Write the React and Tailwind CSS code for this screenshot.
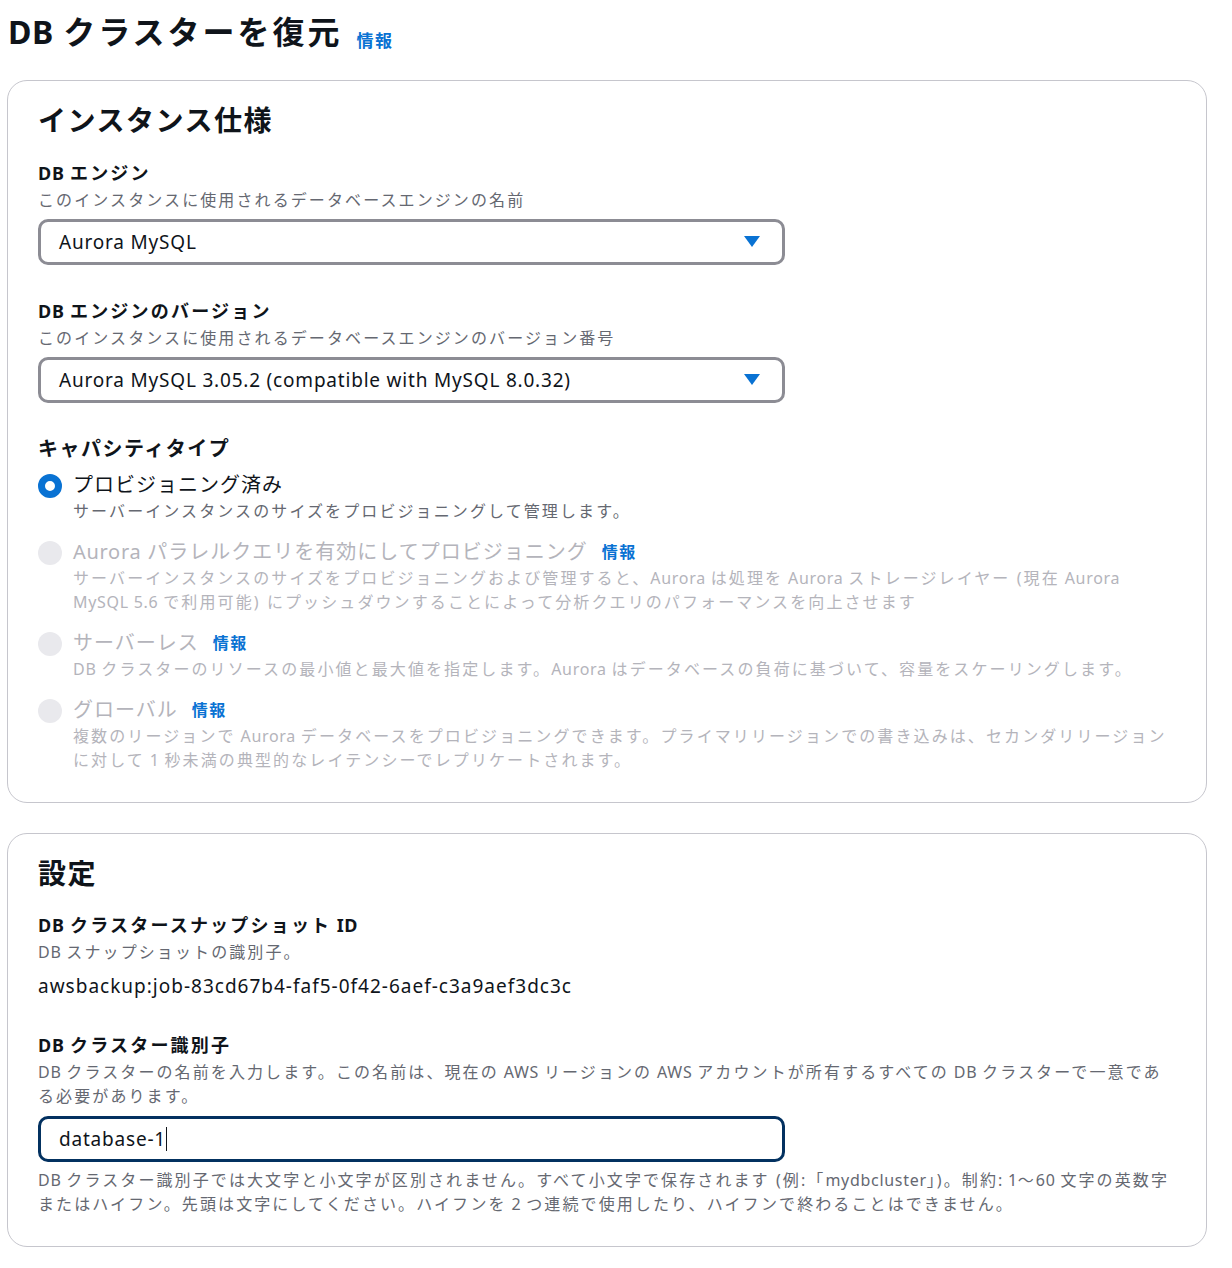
import React from "react";

const font = { fontFamily: '"Noto Sans", "Noto Sans CJK JP", sans-serif' };

// Latin runs keep a near-normal letter spacing; Japanese runs get the wider spacing of the parent.
const T = ({ children }) =>
  String(children)
    .split(/([\u0020-\u007e]*[A-Za-z0-9][\u0020-\u007e]*)/)
    .map((part, i) =>
      i % 2 === 1 ? (
        <span key={i} className="tracking-[0.7px]">{part}</span>
      ) : (
        part
      )
    );

const Info = ({ className = "" }) => (
  <a className={`text-[#0972d3] font-bold text-[16px] tracking-[1.5px] ${className}`}>情報</a>
);

const Field = ({ label, desc, children }) => (
  <div className="flex flex-col">
    <div className="text-[18px] leading-[29px] font-bold tracking-[2.2px] text-[#0f141a]"><T>{label}</T></div>
    <div className="text-[16px] leading-[24px] tracking-[2.1px] text-[#656871]"><T>{desc}</T></div>
    {children}
  </div>
);

const Select = ({ value }) => (
  <div className="mt-[7px] w-[747px] h-[46px] rounded-[10px] border-[3px] border-[#8c8c94] flex items-center justify-between pl-[18px] pr-[22px] text-[19px] tracking-[0.8px] text-[#0f141a]">
    <span>{value}</span>
    <svg width="16" height="12" viewBox="0 0 16 12">
      <path d="M0 0 H16 L8 11 Z" fill="#0972d3" />
    </svg>
  </div>
);

const Radio = ({ checked, disabled, label, info, children }) => (
  <div className="flex gap-[11px]">
    <div className="pt-[3px]">
      {checked ? (
        <div className="w-[24px] h-[24px] rounded-full border-[7px] border-[#0972d3] bg-white" />
      ) : (
        <div className="w-[24px] h-[24px] rounded-full bg-[#e9e9ed]" />
      )}
    </div>
    <div className="flex flex-col">
      <div className={`flex items-center gap-[14px] text-[20px] leading-[28px] tracking-[1px] ${disabled ? "text-[#b4b4bb]" : "text-[#0f141a]"}`}>
        <span><T>{label}</T></span>
        {info && <Info />}
      </div>
      <div className={`text-[16px] leading-[24px] tracking-[2.1px] ${disabled ? "text-[#b4b4bb]" : "text-[#656871]"}`}><T>{children}</T></div>
    </div>
  </div>
);

const App = () => {
  return (
    <div style={font} className="w-[1232px] min-h-[1268px] bg-white text-[#0f141a]">
      <div className="flex items-end gap-[14px] pl-[8px] pt-[10px]">
        <h1 className="text-[32px] leading-[44px] font-bold tracking-[3px]"><T>DB クラスターを復元</T></h1>
        <Info className="text-[17px] mb-[1px]" />
      </div>

      {/* インスタンス仕様 */}
      <div className="mt-[26px] ml-[7px] w-[1200px] rounded-[20px] border border-[#c6c6cd] pl-[30px] pr-[28px] pt-[21px] pb-[30px]">
        <h2 className="text-[28px] leading-[36px] font-bold tracking-[1.5px]">インスタンス仕様</h2>
        <div className="mt-[21px] flex flex-col gap-[32px]">
          <Field label="DB エンジン" desc="このインスタンスに使用されるデータベースエンジンの名前">
            <Select value="Aurora MySQL" />
          </Field>
          <Field label="DB エンジンのバージョン" desc="このインスタンスに使用されるデータベースエンジンのバージョン番号">
            <Select value="Aurora MySQL 3.05.2 (compatible with MySQL 8.0.32)" />
          </Field>
          <div className="flex flex-col">
            <div className="text-[20px] leading-[28px] font-bold tracking-[1.5px]">キャパシティタイプ</div>
            <div className="mt-[8px] flex flex-col gap-[15px]">
              <Radio checked label="プロビジョニング済み">
                サーバーインスタンスのサイズをプロビジョニングして管理します。
              </Radio>
              <Radio disabled info label="Aurora パラレルクエリを有効にしてプロビジョニング">
                サーバーインスタンスのサイズをプロビジョニングおよび管理すると、Aurora は処理を Aurora ストレージレイヤー (現在 Aurora MySQL 5.6 で利用可能) にプッシュダウンすることによって分析クエリのパフォーマンスを向上させます
              </Radio>
              <Radio disabled info label="サーバーレス">
                DB クラスターのリソースの最小値と最大値を指定します。Aurora はデータベースの負荷に基づいて、容量をスケーリングします。
              </Radio>
              <Radio disabled info label="グローバル">
                複数のリージョンで Aurora データベースをプロビジョニングできます。プライマリリージョンでの書き込みは、セカンダリリージョンに対して 1 秒未満の典型的なレイテンシーでレプリケートされます。
              </Radio>
            </div>
          </div>
        </div>
      </div>

      {/* 設定 */}
      <div className="mt-[30px] ml-[7px] w-[1200px] rounded-[20px] border border-[#c6c6cd] pl-[30px] pr-[28px] pt-[21px] pb-[30px]">
        <h2 className="text-[28px] leading-[36px] font-bold tracking-[1.5px]">設定</h2>
        <div className="mt-[20px] flex flex-col gap-[31px]">
          <Field label="DB クラスタースナップショット ID" desc="DB スナップショットの識別子。">
            <div className="mt-[8px] text-[19px] leading-[28px] tracking-[1px]">awsbackup:job-83cd67b4-faf5-0f42-6aef-c3a9aef3dc3c</div>
          </Field>
          <Field
            label="DB クラスター識別子"
            desc="DB クラスターの名前を入力します。この名前は、現在の AWS リージョンの AWS アカウントが所有するすべての DB クラスターで一意である必要があります。"
          >
            <div className="mt-[8px] w-[747px] h-[46px] rounded-[10px] border-[3px] border-[#033160] flex items-center pl-[18px] text-[19px] tracking-[0.8px]">
              <span>database-1</span>
              <span className="w-[1px] h-[24px] bg-[#0f141a]" />
            </div>
            <div className="mt-[6px] text-[16px] leading-[24px] tracking-[2.1px] text-[#656871]">
              <T>DB クラスター識別子では大文字と小文字が区別されません。すべて小文字で保存されます (例:「mydbcluster」)。制約: 1～60 文字の英数字またはハイフン。先頭は文字にしてください。ハイフンを 2 つ連続で使用したり、ハイフンで終わることはできません。</T>
            </div>
          </Field>
        </div>
      </div>
    </div>
  );
};

export default App;
